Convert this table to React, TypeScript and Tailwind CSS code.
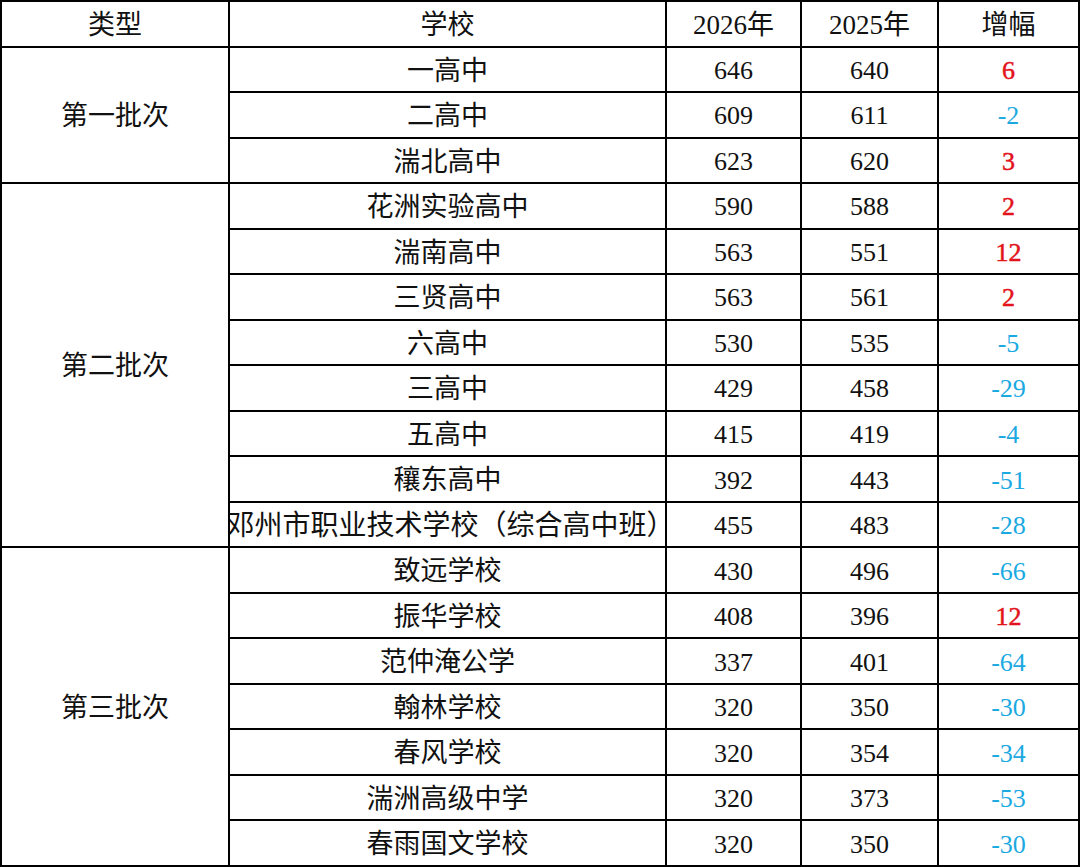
const font = {
  fontFamily: '"Liberation Serif", "Noto Sans CJK SC", serif',
};

type Row = { name: string; a: number; b: number };

const groups: { label: string; rows: Row[] }[] = [
  {
    label: "第一批次",
    rows: [
      { name: "一高中", a: 646, b: 640 },
      { name: "二高中", a: 609, b: 611 },
      { name: "湍北高中", a: 623, b: 620 },
    ],
  },
  {
    label: "第二批次",
    rows: [
      { name: "花洲实验高中", a: 590, b: 588 },
      { name: "湍南高中", a: 563, b: 551 },
      { name: "三贤高中", a: 563, b: 561 },
      { name: "六高中", a: 530, b: 535 },
      { name: "三高中", a: 429, b: 458 },
      { name: "五高中", a: 415, b: 419 },
      { name: "穰东高中", a: 392, b: 443 },
      { name: "邓州市职业技术学校（综合高中班）", a: 455, b: 483 },
    ],
  },
  {
    label: "第三批次",
    rows: [
      { name: "致远学校", a: 430, b: 496 },
      { name: "振华学校", a: 408, b: 396 },
      { name: "范仲淹公学", a: 337, b: 401 },
      { name: "翰林学校", a: 320, b: 350 },
      { name: "春风学校", a: 320, b: 354 },
      { name: "湍洲高级中学", a: 320, b: 373 },
      { name: "春雨国文学校", a: 320, b: 350 },
    ],
  },
];

const spans = ["row-span-3", "row-span-8", "row-span-7"];

function Cell({ children, className = "" }: { children: React.ReactNode; className?: string }) {
  return (
    <div className={`bg-white flex items-center justify-center whitespace-nowrap overflow-hidden ${className}`}>
      {children}
    </div>
  );
}

export default function App() {
  return (
    <div className="w-[1080px] h-[867px] bg-white" style={font}>
      <div className="h-full bg-black p-[2px] grid grid-cols-[226px_435px_133px_135px_139px] grid-rows-[repeat(19,minmax(0,1fr))] gap-[2px]">
        <Cell className="text-[27px] text-[#111] pt-[2px]">类型</Cell>
        <Cell className="text-[27px] text-[#111] pt-[2px]">学校</Cell>
        <Cell className="text-[27px] text-[#111] pt-[2px]">2026年</Cell>
        <Cell className="text-[27px] text-[#111] pt-[2px]">2025年</Cell>
        <Cell className="text-[27px] text-[#111] pt-[2px]">增幅</Cell>
        {groups.map((g, gi) => [
          <Cell key={g.label} className={`${spans[gi]} text-[27px] text-[#111] pt-[3px]`}>
            {g.label}
          </Cell>,
          ...g.rows.flatMap((r) => {
            const d = r.a - r.b;
            const long = r.name.length > 10;
            return [
              <Cell
                key={r.name + "n"}
                className={`text-[#111] pt-[3px] ${long ? "text-[28px] pl-[6px]" : "text-[27px]"}`}
              >
                {r.name}
              </Cell>,
              <Cell key={r.name + "a"} className="text-[26px] text-[#111] pt-[2px]">{r.a}</Cell>,
              <Cell key={r.name + "b"} className="text-[26px] text-[#111] pt-[2px]">{r.b}</Cell>,
              <Cell
                key={r.name + "d"}
                className={`text-[26px] pt-[2px] ${d > 0 ? "text-[#e3121b] [-webkit-text-stroke:0.5px_#e3121b]" : "text-[#1ba9e1]"}`}
              >
                {d}
              </Cell>,
            ];
          }),
        ])}
      </div>
    </div>
  );
}
